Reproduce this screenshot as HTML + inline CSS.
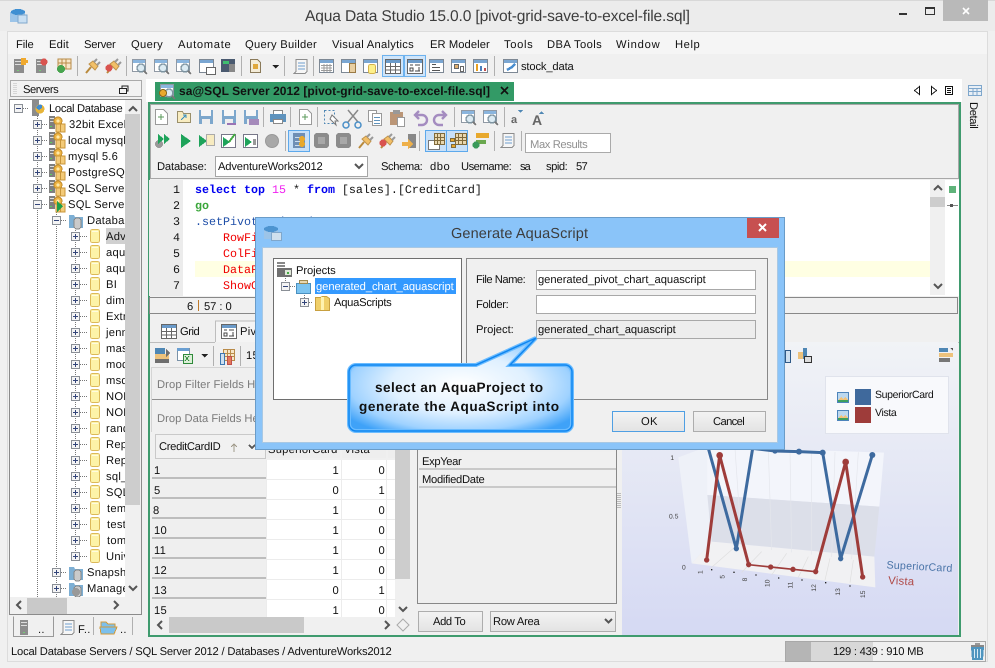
<!DOCTYPE html>
<html><head><meta charset="utf-8"><title>Aqua Data Studio</title>
<style>
html,body{margin:0;padding:0;background:#f0f0f0;overflow:hidden}
svg{display:block}
text{font-family:"Liberation Sans",sans-serif;font-size:11.2px;fill:#111;letter-spacing:.25px;text-rendering:geometricPrecision}
.m{font-family:"Liberation Mono",monospace;font-size:11.67px;letter-spacing:0}
.b{font-weight:bold}
.dot{stroke:#777;stroke-width:1;stroke-dasharray:1 1;fill:none}
.sep{stroke:#b0b0b0;stroke-width:1}
.chev{fill:none;stroke:#555;stroke-width:2}
</style></head><body>
<svg width="995" height="668" viewBox="0 0 995 668" xmlns="http://www.w3.org/2000/svg" shape-rendering="crispEdges">
<defs>
<linearGradient id="chartg" x1="0" y1="0" x2="0" y2="1"><stop offset="0" stop-color="#f1f3f6"/><stop offset="1" stop-color="#d5d9f3"/></linearGradient>
<linearGradient id="btn" x1="0" y1="0" x2="0" y2="1"><stop offset="0" stop-color="#f3f3f3"/><stop offset="1" stop-color="#e3e3e3"/></linearGradient>
<radialGradient id="bub" cx="50%" cy="50%" r="62%"><stop offset="0" stop-color="#ffffff"/><stop offset=".5" stop-color="#dff0ff"/><stop offset=".8" stop-color="#9fd2ff"/><stop offset="1" stop-color="#3fa2f8"/></radialGradient>
<clipPath id="treeclip"><rect x="10" y="100" width="115" height="497"/></clipPath>

<g id="pl"><rect x=".5" y=".5" width="8" height="8" fill="#f4f4f4" stroke="#8a8f96"/><path d="M2 4.500h5M4.500 2v5" stroke="#33457a"/></g>
<g id="mi"><rect x=".5" y=".5" width="8" height="8" fill="#f4f4f4" stroke="#8a8f96"/><path d="M2 4.500h5" stroke="#33457a"/></g>
<g id="db"><rect x=".5" y=".5" width="9" height="13" rx="2" fill="#fdf3a8" stroke="#dcb95a"/><rect x="2" y="2" width="6" height="1" fill="#fffbe0"/></g>
<g id="srv"><rect x="0" y="0" width="6" height="13" fill="#7f7f7f"/><rect x="1" y="2" width="4" height="1" fill="#ddd"/><rect x="1" y="5" width="4" height="1" fill="#ddd"/><rect x="1" y="10" width="2" height="1" fill="#5cd05c"/><circle cx="9" cy="5" r="4" fill="#eeb443" stroke="#c08a2a"/><circle cx="9" cy="5" r="1.500" fill="#fde9a8"/><rect x="7" y="8" width="9" height="8" fill="#f3ca78" stroke="#c8963a"/><path d="M11.500 8v8" stroke="#c8963a"/></g>
<g id="folderdb"><path d="M0 2h5l1 2h8v11H0z" fill="#7dafd4"/><rect x="5" y="5" width="7" height="11" rx="3" fill="#cacaca" stroke="#888"/></g>

<g id="win"><rect x=".5" y=".5" width="14" height="13" fill="#fff" stroke="#7d8894"/><rect x="1" y="1" width="13" height="3" fill="#7aa6d2"/></g>
<g id="wing"><use href="#win"/><path d="M2 6.500h11M2 9h11M2 11.500h11M5 5v8M8 5v8M11 5v8" stroke="#9b9b9b"/></g>
<g id="winq"><rect x=".5" y=".5" width="13" height="12" fill="#fff" stroke="#9099a4"/><rect x="1" y="1" width="12" height="3" fill="#8ab5de"/><circle cx="9" cy="9" r="4" fill="#dcebf3" stroke="#7d93a0" stroke-width="1.400"/><path d="M12 12l3 3" stroke="#777" stroke-width="2"/></g>
<g id="grid"><rect x=".5" y=".5" width="15" height="14" fill="#fff" stroke="#666"/><rect x="1" y="1" width="14" height="3" fill="#6a9ac9"/><path d="M1 7.500h14M1 11h14M5.500 4v10M10.500 4v10" stroke="#666"/></g>
<g id="pivot"><rect x=".5" y=".5" width="15" height="14" fill="#fff" stroke="#666"/><rect x="1" y="1" width="14" height="3" fill="#6a9ac9"/><path d="M3 6h3M3 9h3v3H3zM8 12h5M12 8v4M8 6h5" stroke="#444" fill="none"/></g>
<g id="plug" shape-rendering="auto"><path d="M2 15l5-6" stroke="#b98a3c" stroke-width="2"/><path d="M5 6l6 6 3-4-5-5z" fill="#f2c068" stroke="#c0924a"/><path d="M10 4l3-3M13 7l3-3" stroke="#999" stroke-width="2"/></g>
<g id="gs"><path d="M0 1h10v14H0z" fill="#8c8c8c"/><rect x="1" y="3" width="8" height="1" fill="#ddd"/><rect x="1" y="6" width="8" height="1" fill="#ddd"/><rect x="3" y="12" width="2" height="1" fill="#7c7"/></g>
<g id="doc"><path d="M1.500 .5h8l4 4v11h-12z" fill="#fff" stroke="#9a9a9a"/><path d="M4 8h6M7 5v6" stroke="#5a9a5a"/></g>
<g id="save"><rect x="1" y="1" width="14" height="14" fill="#7da7cc"/><rect x="3" y="1" width="10" height="6" fill="#f6f6f6"/><rect x="4" y="10" width="8" height="5" fill="#eee"/></g>
<g id="scroll"><path d="M3 .5h11v12l-2 2H1l2-2z" fill="#f6f6f6" stroke="#8d8d8d"/><path d="M5 4h7M5 7h7M5 10h7" stroke="#6f9fcf"/></g>
<g id="play"><path d="M2 1l10 7-10 7z" fill="#1ea35a"/></g>
<g id="tb"><rect x="0" y="0" width="15" height="15" fill="#8c8c8c" rx="3"/><rect x="4" y="4" width="7" height="7" fill="#a8a8a8"/></g>
<g id="land"><rect x="0" y="0" width="12" height="11" fill="#4d84bb"/><rect x="1" y="1" width="10" height="9" fill="#bcd8ee"/><path d="M1 8l3-3 2 2 2-2 3 3v2H1z" fill="#f3c277"/><rect x="1" y="8" width="10" height="2" fill="#3ea05d"/></g>
</defs>

<!-- window -->
<rect width="995" height="668" fill="#f0f0f0"/>
<rect x="0" y="0" width="995" height="31" fill="#ececec"/>
<rect x="0" y="0" width="995" height="1" fill="#d8d8d8"/>
<rect x="7.500" y="31.500" width="980" height="630" fill="#f0f0f0" stroke="#dcdcdc"/>
<g transform="translate(10,7)"><rect x="0" y="5" width="15" height="10" fill="#9cc4e8"/><ellipse cx="8" cy="5" rx="7" ry="3" fill="#3f8fd2"/><rect x="8" y="8" width="9" height="8" fill="#c9dff2" stroke="#7fa7cc"/></g>
<text x="305" y="21" style="font-size:15.6px;fill:#3d3d3d;letter-spacing:0" textLength="385">Aqua Data Studio 15.0.0 [pivot-grid-save-to-excel-file.sql]</text>
<rect x="899" y="13" width="8" height="2" fill="#333"/>
<rect x="925.500" y="7.500" width="9" height="7" fill="none" stroke="#333"/><rect x="925" y="7" width="10" height="2" fill="#333"/>
<rect x="943" y="0" width="45" height="21" fill="#b9b9b9"/>
<path d="M963 8l6 6M969 8l-6 6" stroke="#fff" stroke-width="1.600" shape-rendering="auto"/>

<!-- menu -->
<rect x="8" y="32" width="979" height="22" fill="#f5f5f5"/>
<text x="16" y="48" textLength="18">File</text><text x="49" y="48" textLength="20">Edit</text><text x="84" y="48" textLength="32">Server</text><text x="131" y="48" textLength="32">Query</text><text x="178" y="48" textLength="53">Automate</text><text x="245" y="48" textLength="72">Query Builder</text><text x="332" y="48" textLength="82">Visual Analytics</text><text x="430" y="48" textLength="60">ER Modeler</text><text x="504" y="48" textLength="29">Tools</text><text x="547" y="48" textLength="55">DBA Tools</text><text x="616" y="48" textLength="44">Window</text><text x="675" y="48" textLength="25">Help</text>

<!-- main toolbar -->
<use href="#gs" x="14" y="58"/><path d="M21 58h5v2h2v3h-2v2h-5z" fill="#f0a92e"/>
<use href="#gs" x="36" y="58"/><circle cx="44" cy="62" r="3.500" fill="#d9534f"/>
<g transform="translate(57,58)"><rect x="1" y="1" width="13" height="10" fill="#f7e6c7" stroke="#b98b49"/><path d="M5 1v10M9 1v10M1 5h13" stroke="#b98b49"/><circle cx="4" cy="11" r="4" fill="#48a44e"/></g>
<line class="sep" x1="77.500" y1="56" x2="77.500" y2="76"/>
<use href="#plug" x="84" y="58"/><use href="#plug" x="105" y="58"/><circle cx="109" cy="68" r="3.500" fill="#d9534f"/>
<line class="sep" x1="126.500" y1="56" x2="126.500" y2="76"/>
<use href="#winq" x="132" y="59"/><use href="#winq" x="154" y="59"/><use href="#winq" x="176" y="59"/><use href="#win" x="199" y="59"/><rect x="206.500" y="67.500" width="9" height="7" fill="#fff" stroke="#666"/>
<rect x="221" y="59" width="14" height="13" fill="#4a5a70"/><rect x="223" y="61" width="6" height="3" fill="#3fbf6f"/><rect x="229" y="64" width="6" height="8" fill="#888"/>
<line class="sep" x1="241.500" y1="56" x2="241.500" y2="76"/>
<path d="M250.500 59.500h7l3 3v10h-10z" fill="#f4ecd8" stroke="#8a7a5a"/><rect x="253" y="64" width="5" height="5" fill="#e0a83b"/><path d="M272 65h7l-3.500 3.500z" fill="#222"/>
<line class="sep" x1="284.500" y1="56" x2="284.500" y2="76"/>
<use href="#scroll" x="293" y="59"/>
<line class="sep" x1="313.500" y1="56" x2="313.500" y2="76"/>
<use href="#wing" x="319" y="59"/>
<use href="#win" x="341" y="59"/><rect x="349.500" y="63.500" width="6" height="9" fill="#e8cfa2" stroke="#9a7a45"/>
<use href="#win" x="363" y="59"/><rect x="368.500" y="64.500" width="7" height="9" rx="2" fill="#fdf08a" stroke="#d4b14a"/>
<rect x="382.500" y="55.500" width="21" height="21" fill="#cfe5fa" stroke="#6db2ee"/><use href="#grid" x="385" y="59"/>
<rect x="404.500" y="55.500" width="21" height="21" fill="#cfe5fa" stroke="#6db2ee"/><use href="#pivot" x="407" y="59"/>
<use href="#win" x="429" y="59"/><path d="M432 64.500h4M432 67.500h8M432 70.500h8" stroke="#555"/>
<use href="#win" x="451" y="59"/><rect x="454.500" y="64.500" width="4" height="4" fill="#e0b070" stroke="#666"/><rect x="460.500" y="66.500" width="3" height="5" fill="#fff" stroke="#666"/>
<use href="#win" x="473" y="59"/><rect x="476" y="64" width="2" height="7" fill="#e8a020"/><rect x="480" y="66" width="2" height="5" fill="#4a7ebb"/><rect x="484" y="68" width="2" height="3" fill="#c0504d"/>
<line class="sep" x1="494.500" y1="56" x2="494.500" y2="76"/>
<g transform="translate(503,59)"><use href="#win"/><path d="M4 11l5-3 3-3" stroke="#4a8ed0" stroke-width="2.500" fill="none"/></g>
<text x="521" y="70" textLength="53">stock_data</text>

<!-- left servers panel -->
<rect x="10.500" y="80.500" width="131" height="16" fill="#f2f2f2" stroke="#aaa"/>
<path d="M14 83v12M16 83v12" stroke="#bbb" stroke-dasharray="1 1"/>
<text x="23" y="93" textLength="36">Servers</text>
<rect x="119.500" y="88.500" width="7" height="5" fill="none" stroke="#222"/><path d="M122 88v-2h6v5h-2" fill="none" stroke="#222"/>
<rect x="9.500" y="99.500" width="132" height="515" fill="#f0f0f0" stroke="#8b8b8b"/>
<rect x="10" y="100" width="115" height="497" fill="#fff"/>
<rect x="125" y="114" width="15" height="391" fill="#cdcdcd"/>
<path class="chev" d="M129 111l4-4 4 4M129 586l4 4 4-4" shape-rendering="auto"/>
<rect x="27" y="598" width="40" height="16" fill="#c9c9c9"/>
<path class="chev" d="M21 601l-4 4 4 4M114 601l4 4-4 4" shape-rendering="auto"/>

<g clip-path="url(#treeclip)">
<path class="dot" d="M37.500 116V597M56.500 212V597M75.500 228V560"/>
<path class="dot" d="M23 108.500h6M42 124.500h6M42 140.500h6M42 156.500h6M42 172.500h6M42 188.500h6M42 204.500h6M61 220.500h6M80 236.500h8M80 252.500h8M80 268.500h8M80 284.500h8M80 300.500h8M80 316.500h8M80 332.500h8M80 348.500h8M80 364.500h8M80 380.500h8M80 396.500h8M80 412.500h8M80 428.500h8M80 444.500h8M80 460.500h8M80 476.500h8M80 492.500h8M80 508.500h8M80 524.500h8M80 540.500h8M80 556.500h8M61 572.500h6M61 588.500h6"/>
<use href="#mi" x="14" y="104"/>
<g transform="translate(32,100)"><rect width="7" height="16" fill="#8c8c8c"/><circle cx="8" cy="9" r="4.500" fill="#e7b53a"/><path d="M4 8a4.500 4.500 0 0 1 6-3v3l-3 2z" fill="#3f8bd0"/></g>
<text x="49" y="112" textLength="74">Local Database</text>
<use href="#pl" x="33" y="120"/><use href="#srv" x="49" y="116"/>
<use href="#pl" x="33" y="136"/><use href="#srv" x="49" y="132"/>
<use href="#pl" x="33" y="152"/><use href="#srv" x="49" y="148"/>
<use href="#pl" x="33" y="168"/><use href="#srv" x="49" y="164"/>
<use href="#pl" x="33" y="184"/><use href="#srv" x="49" y="180"/>
<use href="#mi" x="33" y="200"/><use href="#srv" x="49" y="196"/>
<path d="M57 201l6 5-6 6z" fill="#1fa04a"/>
<text x="69" y="128">32bit Excel</text><text x="68" y="144">local mysql</text><text x="68" y="160">mysql 5.6</text><text x="68" y="176">PostgreSQL</text><text x="68" y="192">SQL Server</text><text x="68" y="208">SQL Server</text>
<use href="#mi" x="52" y="216"/><use href="#folderdb" x="69" y="213"/><text x="87" y="224">Databases</text>
<rect x="106" y="228" width="19" height="16" fill="#d0d0d0"/>
<use href="#pl" x="71" y="232"/><use href="#db" x="90" y="229"/><text x="106" y="240">AdventureWorks</text>
<use href="#pl" x="71" y="248"/><use href="#db" x="90" y="245"/><text x="106" y="256">aqua</text>
<use href="#pl" x="71" y="264"/><use href="#db" x="90" y="261"/><text x="106" y="272">aqua</text>
<use href="#pl" x="71" y="280"/><use href="#db" x="90" y="277"/><text x="106" y="288">BI</text>
<use href="#pl" x="71" y="296"/><use href="#db" x="90" y="293"/><text x="106" y="304">dimen</text>
<use href="#pl" x="71" y="312"/><use href="#db" x="90" y="309"/><text x="106" y="320">Extra</text>
<use href="#pl" x="71" y="328"/><use href="#db" x="90" y="325"/><text x="106" y="336">jenna</text>
<use href="#pl" x="71" y="344"/><use href="#db" x="90" y="341"/><text x="106" y="352">master</text>
<use href="#pl" x="71" y="360"/><use href="#db" x="90" y="357"/><text x="106" y="368">model</text>
<use href="#pl" x="71" y="376"/><use href="#db" x="90" y="373"/><text x="106" y="384">msdb</text>
<use href="#pl" x="71" y="392"/><use href="#db" x="90" y="389"/><text x="106" y="400">NORTH</text>
<use href="#pl" x="71" y="408"/><use href="#db" x="90" y="405"/><text x="106" y="416">NORTH</text>
<use href="#pl" x="71" y="424"/><use href="#db" x="90" y="421"/><text x="106" y="432">rand</text>
<use href="#pl" x="71" y="440"/><use href="#db" x="90" y="437"/><text x="106" y="448">Report</text>
<use href="#pl" x="71" y="456"/><use href="#db" x="90" y="453"/><text x="106" y="464">Report</text>
<use href="#pl" x="71" y="472"/><use href="#db" x="90" y="469"/><text x="106" y="480">sql_x</text>
<use href="#pl" x="71" y="488"/><use href="#db" x="90" y="485"/><text x="106" y="496">SQLx</text>
<use href="#pl" x="71" y="504"/><use href="#db" x="90" y="501"/><text x="107" y="512">temp</text>
<use href="#pl" x="71" y="520"/><use href="#db" x="90" y="517"/><text x="107" y="528">test</text>
<use href="#pl" x="71" y="536"/><use href="#db" x="90" y="533"/><text x="107" y="544">tom</text>
<use href="#pl" x="71" y="552"/><use href="#db" x="90" y="549"/><text x="106" y="560">Unive</text>
<use href="#pl" x="52" y="568"/><use href="#folderdb" x="69" y="565"/><text x="87" y="576">Snapshots</text>
<use href="#pl" x="52" y="584"/><use href="#folderdb" x="69" y="581"/><circle cx="76" cy="592" r="4" fill="#999"/><text x="87" y="592">Management</text>
</g>

<!-- left tabs -->
<path d="M13.500 616.500v20h40v-20" fill="#f0f0f0" stroke="#999"/>
<g transform="translate(20,620)"><rect width="8" height="15" fill="#8c8c8c"/><rect x="1" y="2" width="6" height="1" fill="#ddd"/><rect x="1" y="5" width="6" height="1" fill="#ddd"/><rect x="3" y="12" width="2" height="1" fill="#7c7"/></g>
<text x="38" y="633">..</text>
<g transform="translate(60,620)"><use href="#scroll"/></g><text x="78" y="633">F..</text>
<line class="sep" x1="93.500" y1="617" x2="93.500" y2="635"/>
<path d="M101 622h5l2 2h7v3h-14zM100 627h17l-3 7h-13z" fill="#7cc0ec" stroke="#d09a3c"/><text x="120" y="633">..</text>
<line class="sep" x1="132.500" y1="617" x2="132.500" y2="635"/>

<!-- main area -->
<rect x="146" y="79" width="816" height="23" fill="#fff"/>
<path d="M155 101v-19h359v19z" fill="#339a66"/>
<use href="#winq" x="160" y="84"/><circle cx="163" cy="93" r="3.500" fill="#e8a92e" stroke="#8a6a20"/>
<text class="b" x="179" y="95" textLength="311" style="font-size:12px;letter-spacing:0">sa@SQL Server 2012 [pivot-grid-save-to-excel-file.sql]</text>
<path d="M501 87l7 7M508 87l-7 7" stroke="#111" stroke-width="1.600" shape-rendering="auto"/>
<path d="M919.500 86.500l-5 4 5 4zM931.500 86.500l5 4-5 4z" fill="#fff" stroke="#111"/>
<rect x="945.500" y="86.500" width="7" height="8" fill="#fff" stroke="#111"/><path d="M947 88.500h4M947 90.500h4M947 92.500h4" stroke="#111"/>

<rect x="149" y="103" width="811" height="533" fill="#f0f0f0" stroke="#3f9b6e" stroke-width="2"/>
<rect x="150.500" y="104.500" width="808" height="74" fill="#f0f0f0" stroke="#a8a8a8"/>

<!-- editor toolbar row1 -->
<use href="#doc" x="154" y="109"/>
<g transform="translate(177,110)"><path d="M.5 1.500h5l1 2h7v9H.5z" fill="#f8ecc0" stroke="#9a8f6a"/><path d="M4 10l5-5M6 5h3v3" stroke="#3a8fbf" fill="none"/></g>
<use href="#save" x="198" y="109"/><use href="#save" x="221" y="109"/><use href="#save" x="243" y="109"/>
<rect x="227" y="123" width="9" height="2" fill="#9a74b5"/><rect x="249" y="119" width="10" height="6" fill="#a58abb"/>
<line class="sep" x1="263.500" y1="107" x2="263.500" y2="127"/>
<g transform="translate(270,110)"><rect x="3.500" y=".5" width="9" height="4" fill="#fff" stroke="#888"/><rect x="0" y="4" width="16" height="8" fill="#5f93bd"/><rect x="3.500" y="9.500" width="9" height="4" fill="#fff" stroke="#888"/></g>
<line class="sep" x1="290.500" y1="107" x2="290.500" y2="127"/>
<use href="#doc" x="298" y="109"/>
<line class="sep" x1="317.500" y1="107" x2="317.500" y2="127"/>
<rect x="324.500" y="110.500" width="10" height="13" fill="none" stroke="#4f87b4" stroke-dasharray="2 2"/><path d="M332 115l6 6-3 0 1 4-6-6z" fill="#fff" stroke="#777" shape-rendering="auto"/>
<g shape-rendering="auto"><path d="M348 110l10 12M358 110l-10 12" stroke="#888" stroke-width="1.500"/><circle cx="346" cy="125" r="3" fill="none" stroke="#4a8fc7" stroke-width="1.500"/><circle cx="358" cy="125" r="3" fill="none" stroke="#4a8fc7" stroke-width="1.500"/></g>
<rect x="368.500" y="110.500" width="8" height="11" fill="#fff" stroke="#999"/><rect x="372.500" y="113.500" width="9" height="12" fill="#fff" stroke="#999"/><path d="M374 117.500h6M374 120.500h6M374 123.500h6" stroke="#5f93bd"/>
<rect x="390" y="112" width="13" height="13" fill="#bb9677"/><rect x="393" y="110" width="7" height="4" fill="#999"/><rect x="397.500" y="117.500" width="7" height="9" fill="#fff" stroke="#999"/>
<g fill="none" stroke="#a48cc0" stroke-width="2.400" shape-rendering="auto"><path d="M415 115h7a5 5 0 0 1 0 10h-4M419 111l-4 4 4 4"/><path d="M446 115h-7a5 5 0 0 0 0 10h4M442 111l4 4-4 4"/></g>
<line class="sep" x1="454.500" y1="107" x2="454.500" y2="127"/>
<use href="#winq" x="461" y="110"/><use href="#winq" x="483" y="110"/>
<line class="sep" x1="504.500" y1="107" x2="504.500" y2="127"/>
<text x="511" y="123" class="b" style="fill:#666;font-size:11px">a</text><path d="M518 110h5l-2.500 3z" fill="#4f87b4"/>
<text x="532" y="125" class="b" style="fill:#666;font-size:14px">A</text><path d="M539 114h5l-2.500-3z" fill="#4f87b4"/>

<!-- editor toolbar row2 -->
<g transform="translate(155,134)"><circle cx="4" cy="10" r="4" fill="#999"/><path d="M3 0l6 5-6 5zM9 0l6 5-6 5z" fill="#1ea35a"/></g>
<use href="#play" x="179" y="133"/>
<g transform="translate(199,134)"><path d="M0 1l8 6-8 6z" fill="#1ea35a"/><rect x="7.500" y=".5" width="8" height="11" fill="#f7ebc0" stroke="#aaa"/></g>
<g transform="translate(221,134)"><rect x=".5" y=".5" width="14" height="13" fill="#fff" stroke="#778"/><path d="M2 3l7 5-7 5z" fill="#1ea35a"/><path d="M8 8l6-8" stroke="#4a4" stroke-width="2"/></g>
<g transform="translate(243,134)"><rect x=".5" y=".5" width="14" height="13" fill="#fff" stroke="#778"/><path d="M2 3l7 5-7 5z" fill="#1ea35a"/><rect x="10" y="5" width="3" height="6" fill="#999"/></g>
<circle cx="272" cy="141" r="6.500" fill="#a8a8a8" stroke="#999" shape-rendering="auto"/>
<line class="sep" x1="285.500" y1="131" x2="285.500" y2="151"/>
<rect x="288.500" y="130.500" width="21" height="21" fill="#c8e0f8" stroke="#5da9ec"/>
<g transform="translate(293,133)"><rect width="12" height="15" fill="#6f8fb5"/><path d="M2 4.500h8M2 8.500h8M2 12.500h8" stroke="#cde"/><circle cx="9" cy="6" r="3" fill="#e8a92e"/><circle cx="9" cy="11" r="3" fill="#e8a92e"/></g>
<use href="#tb" x="314" y="133"/><use href="#tb" x="336" y="133"/>
<use href="#plug" x="357" y="133"/><use href="#plug" x="379" y="133"/><circle cx="383" cy="143" r="3.500" fill="#d9534f"/>
<g transform="translate(402,134)"><rect x="6" y="0" width="8" height="14" fill="#888"/><path d="M0 8h6v-3l5 5-5 5v-3H0z" fill="#eeb04a"/></g>
<line class="sep" x1="419.500" y1="131" x2="419.500" y2="151"/>
<rect x="425.500" y="130.500" width="21" height="21" fill="#c8e0f8" stroke="#5da9ec"/>
<rect x="446.500" y="130.500" width="21" height="21" fill="#c8e0f8" stroke="#5da9ec"/>
<g transform="translate(428,133)"><rect x=".5" y="7.500" width="11" height="9" fill="#fff" stroke="#777"/><rect x="6.500" y=".5" width="10" height="11" fill="#e9d7ae" stroke="#806a3a"/><path d="M9.500 1v10M12.500 1v10M7 4.500h9M7 7.500h9" stroke="#806a3a"/></g>
<g transform="translate(450,133)"><rect x="5.500" y=".5" width="11" height="11" fill="#e9d7ae" stroke="#806a3a"/><path d="M8.500 1v10M12.500 1v10M6 4.500h10M6 7.500h10" stroke="#806a3a"/><path d="M.5 5.500h4v3h-4zM1.500 11.500h4v3h-4z" fill="#e8a92e" stroke="#806a3a"/></g>
<g transform="translate(473,133)"><rect x="3" y="0" width="13" height="5" fill="#e8a92e"/><rect x="3" y="7" width="10" height="4" fill="#6aa84f"/><circle cx="3" cy="12" r="3.500" fill="#3a9a5a"/></g>
<line class="sep" x1="494.500" y1="131" x2="494.500" y2="151"/>
<use href="#scroll" x="500" y="133"/>
<line class="sep" x1="521.500" y1="131" x2="521.500" y2="151"/>
<rect x="525.500" y="133.500" width="85" height="19" fill="#fff" stroke="#aaa"/>
<text x="530" y="148" style="fill:#909090" textLength="58">Max Results</text>

<!-- database row -->
<text x="157" y="170" textLength="50">Database:</text>
<rect x="215.500" y="156.500" width="152" height="20" fill="#fff" stroke="#a5a5a5"/>
<text x="218" y="170" textLength="105">AdventureWorks2012</text>
<path class="chev" d="M355 164l4 4 4-4" shape-rendering="auto"/>
<text x="381" y="170" textLength="42">Schema:</text><text x="430" y="170" textLength="20">dbo</text><text x="461" y="170" textLength="51">Username:</text><text x="520" y="170" textLength="11">sa</text><text x="546" y="170" textLength="22">spid:</text><text x="576" y="170" textLength="12">57</text>

<!-- editor -->
<rect x="149" y="180" width="810" height="116" fill="#fff"/>
<rect x="149" y="180" width="34" height="116" fill="#ececec"/>
<rect x="195" y="261" width="735" height="16" fill="#ffffe3"/>
<text class="m" x="180" y="193" text-anchor="end">1</text><text class="m" x="180" y="209" text-anchor="end">2</text><text class="m" x="180" y="225" text-anchor="end">3</text><text class="m" x="180" y="241" text-anchor="end">4</text><text class="m" x="180" y="257" text-anchor="end">5</text><text class="m" x="180" y="273" text-anchor="end">6</text><text class="m" x="180" y="289" text-anchor="end">7</text>
<text class="m" x="195" y="193"><tspan class="b" style="fill:#0000f0">select top</tspan> <tspan style="fill:#f020f0">15</tspan> * <tspan class="b" style="fill:#0000f0">from</tspan> [sales].[CreditCard]</text>
<text class="m b" x="195" y="209" style="fill:#3aa63a">go</text>
<text class="m" x="195" y="225" style="fill:#1f4fa8">.setPivotOptions(</text>
<text class="m" x="223" y="241" style="fill:#f00000">RowFields</text><text class="m" x="223" y="257" style="fill:#f00000">ColFields</text><text class="m" x="223" y="273" style="fill:#f00000">DataFields</text><text class="m" x="223" y="289" style="fill:#f00000">ShowColTotals</text>
<rect x="930" y="180" width="15" height="115" fill="#f0f0f0"/><rect x="930" y="197" width="15" height="10" fill="#cdcdcd"/>
<path class="chev" d="M934 190l4-4 4 4M934 284l4 4 4-4" shape-rendering="auto"/>
<rect x="949" y="186" width="7" height="7" fill="#5fb37a"/><path d="M947 205.500h11" stroke="#888"/><rect x="950" y="204" width="3" height="3" fill="#555"/>

<!-- editor status -->
<rect x="149.500" y="297.500" width="808" height="16" fill="#f0f0f0" stroke="#888"/>
<text x="187" y="310">6</text><rect x="198" y="300" width="1" height="11" fill="#c07a2a"/><text x="204" y="310" textLength="28">57 : 0</text>

<!-- result area -->
<rect x="150" y="320" width="808" height="315" fill="#f0f0f0"/>
<path d="M150 342.500h65M309 342.500h650" stroke="#bdbdbd"/>
<use href="#grid" x="161" y="324"/><text x="180" y="335" textLength="20">Grid</text>
<path d="M215.500 342v-21h100v21" fill="#f4f4f4" stroke="#bdbdbd"/>
<use href="#pivot" x="221" y="324"/><text x="240" y="335">Pivot</text>
<g transform="translate(155,348)"><rect width="10" height="6" fill="#4f87b4"/><rect y="6" width="14" height="5" fill="#edc27c"/><rect y="11" width="14" height="4" fill="#6e6e6e"/><path d="M11 1l4 4-4 4z" fill="#6e6e6e"/></g>
<g transform="translate(177,348)"><rect x=".5" y=".5" width="12" height="12" fill="#fff" stroke="#7a92a8"/><rect width="12" height="3" fill="#6a9fd2"/><rect x="6.500" y="6.500" width="9" height="9" fill="#dcefd8" stroke="#2f8a3a"/><path d="M8 8l4 5M12 8l-4 5" stroke="#2f8a3a"/></g>
<path d="M201 354h7l-3.500 3.500z" fill="#222"/>
<line class="sep" x1="213.500" y1="346" x2="213.500" y2="366"/>
<g transform="translate(220,349)"><rect x="3.500" y=".5" width="11" height="11" fill="#f7e6c7" stroke="#b98b49"/><path d="M7.500 1v10M10.500 1v10M4 4.500h10M4 7.500h10" stroke="#b98b49"/><rect x=".5" y="4.500" width="4" height="11" fill="#cfe0f0" stroke="#3e78b2"/><rect x="7.500" y="7.500" width="4" height="8" fill="#e57a5a" stroke="#c0504d"/></g>
<line class="sep" x1="240.500" y1="346" x2="240.500" y2="366"/>
<text x="246" y="359">15</text>
<rect x="151.500" y="367.500" width="260" height="32" fill="#efefef" stroke="#d4d4d4"/>
<path d="M152 399.500h260" stroke="#8f8f8f"/>
<text x="157" y="388" style="fill:#7a7a7a" textLength="115">Drop Filter Fields Here</text>
<path d="M151.500 400v32" stroke="#d4d4d4"/>
<text x="157" y="422" style="fill:#7a7a7a" textLength="112">Drop Data Fields Here</text>

<rect x="155.500" y="434.500" width="110" height="24" fill="#f1f1f1" stroke="#c9c9c9"/>
<text x="159" y="450" textLength="62">CreditCardID</text>
<path d="M234 444v8M231 447l3-3 3 3" fill="none" stroke="#a09a8a"/><path class="chev" d="M249 445l3 3 3-3"/>
<rect x="267" y="443" width="73" height="15" fill="#eee"/><rect x="342" y="443" width="44" height="15" fill="#eee"/><rect x="388" y="443" width="8" height="15" fill="#eee"/>
<text x="268" y="453">SuperiorCard</text><text x="344" y="453">Vista</text>

<rect x="152" y="460" width="114" height="19" fill="#efefef"/><rect x="152" y="477" width="114" height="2" fill="#bdbdbd"/>
<rect x="152" y="480" width="114" height="19" fill="#efefef"/><rect x="152" y="497" width="114" height="2" fill="#bdbdbd"/>
<rect x="152" y="500" width="114" height="19" fill="#efefef"/><rect x="152" y="517" width="114" height="2" fill="#bdbdbd"/>
<rect x="152" y="520" width="114" height="19" fill="#efefef"/><rect x="152" y="537" width="114" height="2" fill="#bdbdbd"/>
<rect x="152" y="540" width="114" height="19" fill="#efefef"/><rect x="152" y="557" width="114" height="2" fill="#bdbdbd"/>
<rect x="152" y="560" width="114" height="19" fill="#efefef"/><rect x="152" y="577" width="114" height="2" fill="#bdbdbd"/>
<rect x="152" y="580" width="114" height="19" fill="#efefef"/><rect x="152" y="597" width="114" height="2" fill="#bdbdbd"/>
<rect x="152" y="600" width="114" height="17" fill="#efefef"/>
<rect x="267" y="460" width="128" height="157" fill="#fff"/>
<path d="M266.500 460v157M341.500 460v157M386.500 460v157M267 479.500h129M267 499.500h129M267 519.500h129M267 539.500h129M267 559.500h129M267 579.500h129M267 599.500h129" stroke="#ececec"/>
<text x="154" y="474">1</text><text x="154" y="494">5</text><text x="153" y="514">8</text><text x="154" y="534">10</text><text x="154" y="554">11</text><text x="154" y="574">12</text><text x="154" y="594">13</text><text x="154" y="614">15</text>
<g text-anchor="end">
<text x="339" y="474">1</text><text x="339" y="494">0</text><text x="339" y="514">1</text><text x="339" y="534">1</text><text x="339" y="554">1</text><text x="339" y="574">1</text><text x="339" y="594">0</text><text x="339" y="614">1</text>
<text x="385" y="474">0</text><text x="385" y="494">1</text><text x="385" y="514">0</text><text x="385" y="534">0</text><text x="385" y="554">0</text><text x="385" y="574">0</text><text x="385" y="594">1</text><text x="385" y="614">0</text>
</g>
<rect x="395" y="445" width="15" height="134" fill="#cdcdcd"/>
<path class="chev" d="M399 607l4 4 4-4" shape-rendering="auto"/>
<rect x="169" y="617" width="135" height="16" fill="#c9c9c9"/>
<path class="chev" d="M162 621l-4 4 4 4M385 621l4 4-4 4" shape-rendering="auto"/>
<path d="M403 619l6 6-6 6-6-6z" fill="none" stroke="#aaa" shape-rendering="auto"/>

<rect x="417.500" y="440.500" width="199" height="163" fill="#efefef" stroke="#888"/>
<rect x="419" y="452" width="197" height="17" fill="#f0f0f0"/><rect x="419" y="468" width="197" height="2" fill="#c9c9c9"/>
<rect x="419" y="470" width="197" height="17" fill="#f0f0f0"/><rect x="419" y="486" width="197" height="2" fill="#c9c9c9"/>
<text x="422" y="465" textLength="40">ExpYear</text><text x="422" y="483" textLength="63">ModifiedDate</text>
<rect x="418.500" y="611.500" width="64" height="20" fill="url(#btn)" stroke="#adadad"/>
<text x="433" y="625" textLength="33">Add To</text>
<rect x="490.500" y="611.500" width="125" height="20" fill="url(#btn)" stroke="#adadad"/>
<text x="493" y="625" textLength="47">Row Area</text>
<path class="chev" d="M605 619l3.500 3.500 3.500-3.500" shape-rendering="auto"/>
<path d="M619 493v16" stroke="#bbb" stroke-width="4" stroke-dasharray="1 1"/>

<!-- chart -->
<rect x="622" y="342" width="336" height="293" fill="url(#chartg)"/>
<g transform="translate(620,340) scale(.33333)" shape-rendering="auto">
<polygon points="175,352 262,320 275,605 215,670" fill="#eef1f8"/>
<polygon points="262,320 792,338 778,500 262,465" fill="#f3f5fb"/>
<polygon points="262,465 778,500 763,650 275,605" fill="#dcdfe9"/>
<polygon points="275,605 763,650 766,742 215,670" fill="#f1f1f3"/>
<path d="M345 325l20 295M445 330l10 300M510 332l5 305M575 334l0 310M645 336l-10 315M715 337l-20 320" stroke="#e4e6ec" stroke-width="2" fill="none"/>
<path d="M340 625l-72 63M425 635l-60 62M500 640l-45 65M565 650l-30 62M630 655l-15 65M700 660l-10 68" stroke="#dedede" stroke-width="2" fill="none"/>
<text x="151" y="360" style="font-size:20px;fill:#444">1</text>
<text x="147" y="535" style="font-size:20px;fill:#444">0.5</text>
<text x="186" y="688" style="font-size:20px;fill:#444">0</text>
<text transform="translate(248,702) rotate(-90)" style="font-size:20px;fill:#444">1</text>
<text transform="translate(314,716) rotate(-90)" style="font-size:20px;fill:#444">5</text>
<text transform="translate(381,724) rotate(-90)" style="font-size:20px;fill:#444">8</text>
<text transform="translate(449,741) rotate(-90)" style="font-size:20px;fill:#444">10</text>
<text transform="translate(518,746) rotate(-90)" style="font-size:20px;fill:#444">11</text>
<text transform="translate(588,755) rotate(-90)" style="font-size:20px;fill:#444">12</text>
<text transform="translate(660,767) rotate(-90)" style="font-size:20px;fill:#444">13</text>
<text transform="translate(735,774) rotate(-90)" style="font-size:20px;fill:#444">15</text>
<path d="M275 691v-4M342 699v-4M408 707v-4M476 716v-4M546 722v-4M617 730v-4M690 740v-4" stroke="#222" stroke-width="4"/>
<polyline points="265,325 349,626 398,325 465,333 537,335 608,338 662,656 757,345" fill="none" stroke="#3d6a9f" stroke-width="9" stroke-linejoin="round"/>
<g fill="#3d6a9f"><circle cx="349" cy="626" r="8"/><circle cx="465" cy="333" r="8"/><circle cx="537" cy="335" r="9"/><circle cx="608" cy="338" r="9"/><circle cx="662" cy="656" r="8"/><circle cx="757" cy="345" r="9"/></g>
<polyline points="260,660 299,346 386,674" fill="none" stroke="#9e3c3a" stroke-width="9" stroke-linejoin="round"/>
<polyline points="386,674 452,681 519,688 587,695" fill="none" stroke="#9e3c3a" stroke-width="5"/>
<polyline points="587,695 677,366 728,711" fill="none" stroke="#9e3c3a" stroke-width="9" stroke-linejoin="round"/>
<g fill="#9e3c3a"><circle cx="260" cy="660" r="8"/><circle cx="299" cy="346" r="10"/><circle cx="386" cy="674" r="8"/><circle cx="452" cy="681" r="8"/><circle cx="519" cy="688" r="8"/><circle cx="587" cy="695" r="8"/><circle cx="677" cy="366" r="10"/><circle cx="728" cy="711" r="8"/></g>
<text transform="translate(799,685) rotate(3)" style="font-size:32px;fill:#4a74a8" textLength="198">SuperiorCard</text>
<text transform="translate(804,732) rotate(3)" style="font-size:34px;fill:#b04a48" textLength="78">Vista</text>
</g>
<rect x="825.500" y="376.500" width="123" height="57" fill="#f8f9fc" stroke="#e0e3ec"/>
<use href="#land" x="837" y="392"/><rect x="855" y="389" width="16" height="16" fill="#3f699c"/><text x="875" y="398" style="font-size:10.500px" textLength="59">SuperiorCard</text>
<use href="#land" x="837" y="410"/><rect x="855" y="407" width="16" height="16" fill="#9e3c3a"/><text x="875" y="416" style="font-size:10.500px" textLength="22">Vista</text>
<g transform="translate(798,348)"><rect x="0" y="4" width="5" height="7" fill="#edc27c"/><rect x="5" y="0" width="4" height="11" fill="#4f87b4"/><rect x="6.500" y="8.500" width="7" height="6" fill="#ddd" stroke="#333"/></g>
<g transform="translate(939,348)"><rect x="0" y="0" width="9" height="4" fill="#4f87b4"/><rect x="0" y="5" width="14" height="4" fill="#edc27c"/><rect x="0" y="10" width="11" height="4" fill="#777"/><path d="M11 0h3v3z" fill="#555"/></g>
<path d="M785.500 350.500h5v12h-5z" fill="#cfe0f0" stroke="#2f5a88"/>

<!-- right detail -->
<g transform="translate(968,85)"><rect x=".5" y=".5" width="13" height="10" fill="#e8eff6" stroke="#7fa7cc"/><path d="M1 3.500h13M1 6.500h13M5 3v8M9 3v8" stroke="#7fa7cc"/></g>
<text transform="translate(970,102) rotate(90)" textLength="27">Detail</text>

<!-- status bar -->
<text x="11" y="655" textLength="381">Local Database Servers / SQL Server 2012 / Databases / AdventureWorks2012</text>
<rect x="785.500" y="641.500" width="200" height="20" fill="#f0f0f0" stroke="#a8a8a8"/>
<rect x="786" y="642" width="25" height="19" fill="#b5b5b5"/><rect x="811" y="642" width="62" height="19" fill="#d8d8d8"/>
<text x="833" y="655" textLength="91">129 : 439 : 910 MB</text>
<g transform="translate(970,643)"><path d="M1 4h13l-1 13H2z" fill="#4f95bf"/><rect x="1" y="2" width="13" height="2" fill="#888"/><rect x="5" y="0" width="5" height="2" fill="#999"/><path d="M4.500 6v9M7.500 6v9M10.500 6v9" stroke="#d8eaf5"/></g>

<!-- dialog -->
<rect x="255.500" y="217.500" width="529" height="232" fill="#8ac4f9" stroke="#6a9cc8"/>
<rect x="747" y="218" width="32" height="20" fill="#c75050"/>
<path d="M759 224l7 7M766 224l-7 7" stroke="#fff" stroke-width="2" shape-rendering="auto"/>
<g transform="translate(264,224)"><rect x="0" y="5" width="14" height="10" fill="#9cc4e8"/><ellipse cx="7" cy="5" rx="7" ry="3" fill="#4d94d0"/><rect x="7.500" y="8.500" width="10" height="8" fill="#cfe0ee" stroke="#7fa7cc"/></g>
<text x="451" y="238" style="font-size:14.500px;fill:#3d3d3d;letter-spacing:0" textLength="137">Generate AquaScript</text>
<rect x="262.500" y="247.500" width="515" height="195" fill="#f0f0f0" stroke="#a8c8e4"/>
<rect x="273.500" y="258.500" width="188" height="141" fill="#fff" stroke="#6e6e6e"/>
<rect x="466.500" y="258.500" width="301" height="141" fill="#f0f0f0" stroke="#888"/>
<g transform="translate(277,262)"><rect width="8" height="2" fill="#888"/><rect y="3" width="8" height="2" fill="#888"/><rect x="0" y="6" width="15" height="9" fill="#707070"/><rect x="8" y="8" width="6" height="5" fill="#dfe8d8"/><rect x="10" y="10" width="2" height="2" fill="#4a4"/></g>
<text x="296" y="274" textLength="40">Projects</text>
<path class="dot" d="M285.500 278v4M290 286.500h5M304.500 295v3M309 302.500h4"/>
<use href="#mi" x="281" y="282"/>
<path d="M296.500 283.500h14v10h-14z" fill="#7cc4f0" stroke="#4a90c0"/><rect x="299.500" y="280.500" width="8" height="3" fill="#e8d8b0" stroke="#a08a50"/>
<rect x="315" y="278" width="141" height="16" fill="#3399ff"/>
<text x="316" y="290" style="fill:#fff" textLength="138">generated_chart_aquascript</text>
<use href="#pl" x="300" y="298"/>
<path d="M315.500 297.500h5l2-1h4l3 2v12h-14z" fill="#f0cf6a" stroke="#c8a040" shape-rendering="auto"/><rect x="321" y="297" width="3" height="13" fill="#fff2b0"/>
<text x="334" y="306" textLength="58">AquaScripts</text>
<text x="476" y="283" textLength="50">File Name:</text>
<rect x="536.500" y="270.500" width="219" height="19" fill="#fff" stroke="#a8a8a8"/>
<text x="538" y="283" textLength="168">generated_pivot_chart_aquascript</text>
<text x="476" y="308" textLength="33">Folder:</text>
<rect x="536.500" y="295.500" width="219" height="18" fill="#fff" stroke="#a8a8a8"/>
<text x="476" y="333" textLength="38">Project:</text>
<rect x="536.500" y="320.500" width="219" height="18" fill="#ededed" stroke="#a8a8a8"/>
<text x="538" y="333" textLength="138">generated_chart_aquascript</text>
<rect x="612.500" y="411.500" width="72" height="20" fill="url(#btn)" stroke="#4f9fe3"/>
<text x="641" y="425">OK</text>
<rect x="693.500" y="411.500" width="72" height="20" fill="url(#btn)" stroke="#adadad"/>
<text x="713" y="425" textLength="32">Cancel</text>

<!-- callout -->
<g shape-rendering="auto">
<path d="M356 365h120l60-27-26 27h55a7 7 0 0 1 7 7v52a7 7 0 0 1-7 7H356a7 7 0 0 1-7-7v-52a7 7 0 0 1 7-7z" fill="url(#bub)" stroke="#6bbcff" stroke-width="4"/>
<path d="M356 365h120l60-27-26 27h55a7 7 0 0 1 7 7v52a7 7 0 0 1-7 7H356a7 7 0 0 1-7-7v-52a7 7 0 0 1 7-7z" fill="none" stroke="#1086f0" stroke-width="1.500"/>
<text x="375" y="392" class="b" style="font-size:13.600px;letter-spacing:0" textLength="168">select an AquaProject to</text>
<text x="359" y="411" class="b" style="font-size:13.600px;letter-spacing:0" textLength="200">generate the AquaScript into</text>
</g>
</svg>
</body></html>
